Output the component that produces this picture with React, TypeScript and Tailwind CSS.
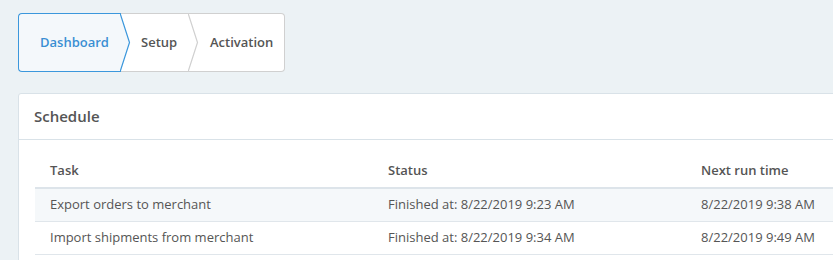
import React from "react";

const steps = [
  { label: "Dashboard", width: "w-[103px]", pad: "pl-[21px]", active: true },
  { label: "Setup", width: "w-[68px]", pad: "pl-[20px]", active: false },
  { label: "Activation", width: "w-[96px]", pad: "pl-[21px]", active: false },
];

const rows = [
  { task: "Export orders to merchant", status: "Finished at: 8/22/2019 9:23 AM", next: "8/22/2019 9:38 AM" },
  { task: "Import shipments from merchant", status: "Finished at: 8/22/2019 9:34 AM", next: "8/22/2019 9:49 AM" },
];

function Chevron({ active }: { active: boolean }) {
  return (
    <svg
      className="absolute top-[-1px] right-[-10px] z-10"
      width="11"
      height="59"
      viewBox="0 0 11 59"
    >
      <polygon points="0,0 9.5,29.5 0,59" fill={active ? "#f4f8fb" : "#ffffff"} />
      <polyline
        points="0,0 9.5,29.5 0,59"
        fill="none"
        stroke={active ? "#3b97dc" : "#d0d0d0"}
        strokeWidth="1.2"
      />
    </svg>
  );
}

export default function App() {
  return (
    <div
      className="w-[833px] h-[260px] overflow-hidden bg-[#ecf2f5] pt-[13px] pl-[18px] text-[#555]"
      style={{ fontFamily: "'Open Sans', 'Liberation Sans', sans-serif" }}
    >
      {/* Wizard steps */}
      <div className="flex h-[59px] w-fit">
        {steps.map((s, i) => (
          <div
            key={s.label}
            className={`relative flex items-center ${s.width} ${s.pad} border-y text-[13px] font-semibold ${
              s.active ? "bg-[#f4f8fb] border-[#3b97dc] border-l text-[#3a8fd3] rounded-l-[4px]" : "bg-white border-[#d0d0d0] text-[#555]"
            } ${i === steps.length - 1 ? "border-r rounded-r-[4px]" : ""}`}
          >
            {s.label}
            {i < steps.length - 1 && <Chevron active={s.active} />}
          </div>
        ))}
      </div>

      {/* Schedule card */}
      <div className="mt-[21px] w-[840px] bg-white border border-[#d9e2e8] rounded-[3px]">
        <div className="h-[46px] flex items-center px-[15px] border-b border-[#d9e2e8] text-[15px] font-semibold text-[#555]">
          Schedule
        </div>
        <div className="pt-[15px] pl-[16px] pb-[20px]">
          <div className="grid grid-cols-[338px_313px_1fr] h-[34px] items-center text-[13px] font-semibold border-b-2 border-[#dde4ea]">
            <div className="pl-[15px]">Task</div>
            <div className="pl-[15px]">Status</div>
            <div className="pl-[15px]">Next run time</div>
          </div>
          {rows.map((r, i) => (
            <div
              key={r.task}
              className={`grid grid-cols-[338px_313px_1fr] h-[33px] items-center text-[13px] border-b border-[#e0e6eb] ${
                i % 2 === 0 ? "bg-[#f5f8fa]" : "bg-white"
              }`}
            >
              <div className="pl-[15px]">{r.task}</div>
              <div className="pl-[15px]">{r.status}</div>
              <div className="pl-[15px]">{r.next}</div>
            </div>
          ))}
        </div>
      </div>
    </div>
  );
}
